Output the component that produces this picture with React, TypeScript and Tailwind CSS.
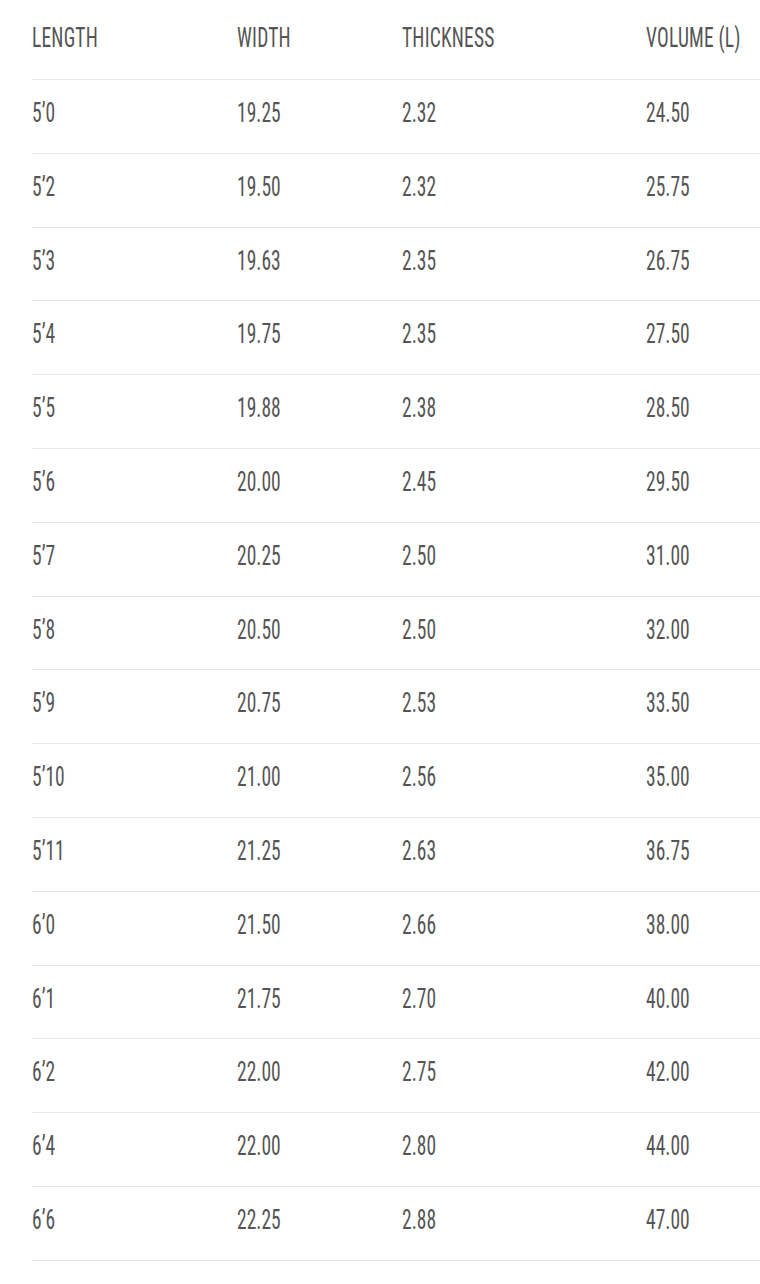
import React from 'react';

const rows = [
  ["5'0", '19.25', '2.32', '24.50'],
  ["5'2", '19.50', '2.32', '25.75'],
  ["5'3", '19.63', '2.35', '26.75'],
  ["5'4", '19.75', '2.35', '27.50'],
  ["5'5", '19.88', '2.38', '28.50'],
  ["5'6", '20.00', '2.45', '29.50'],
  ["5'7", '20.25', '2.50', '31.00'],
  ["5'8", '20.50', '2.50', '32.00'],
  ["5'9", '20.75', '2.53', '33.50'],
  ["5'10", '21.00', '2.56', '35.00'],
  ["5'11", '21.25', '2.63', '36.75'],
  ["6'0", '21.50', '2.66', '38.00'],
  ["6'1", '21.75', '2.70', '40.00'],
  ["6'2", '22.00', '2.75', '42.00'],
  ["6'4", '22.00', '2.80', '44.00'],
  ["6'6", '22.25', '2.88', '47.00'],
];

const headers = ['LENGTH', 'WIDTH', 'THICKNESS', 'VOLUME (L)'];

// tall condensed look: Roboto condensed, stretched vertically
const Cell = ({ text, head }: { text: string; head?: boolean }) => (
  <div className="whitespace-nowrap">
    <span
      className={`inline-block origin-center scale-y-[1.45] font-['Roboto',sans-serif] text-[19.5px] font-normal leading-[20px] text-[#555555] [font-stretch:condensed] ${
        head ? 'tracking-[0.2px]' : ''
      }`}
    >
      {text.replace("'", '\u2019')}
    </span>
  </div>
);

export default function App() {
  return (
    <div className="min-h-[1284px] bg-white pl-8">
      {/* header */}
      <div className="grid h-[80px] grid-cols-[205px_165px_244px_1fr] border-b border-[#e6e6e6] pt-[26px]">
        {headers.map((h) => (
          <Cell key={h} text={h} head />
        ))}
      </div>

      {/* size rows */}
      {rows.map((r, i) => (
        <div
          key={i}
          className="grid h-[73.8px] grid-cols-[205px_165px_244px_1fr] border-b border-[#e6e6e6] pt-[21px]"
        >
          {r.map((c, j) => (
            <Cell key={j} text={c} />
          ))}
        </div>
      ))}
    </div>
  );
}
